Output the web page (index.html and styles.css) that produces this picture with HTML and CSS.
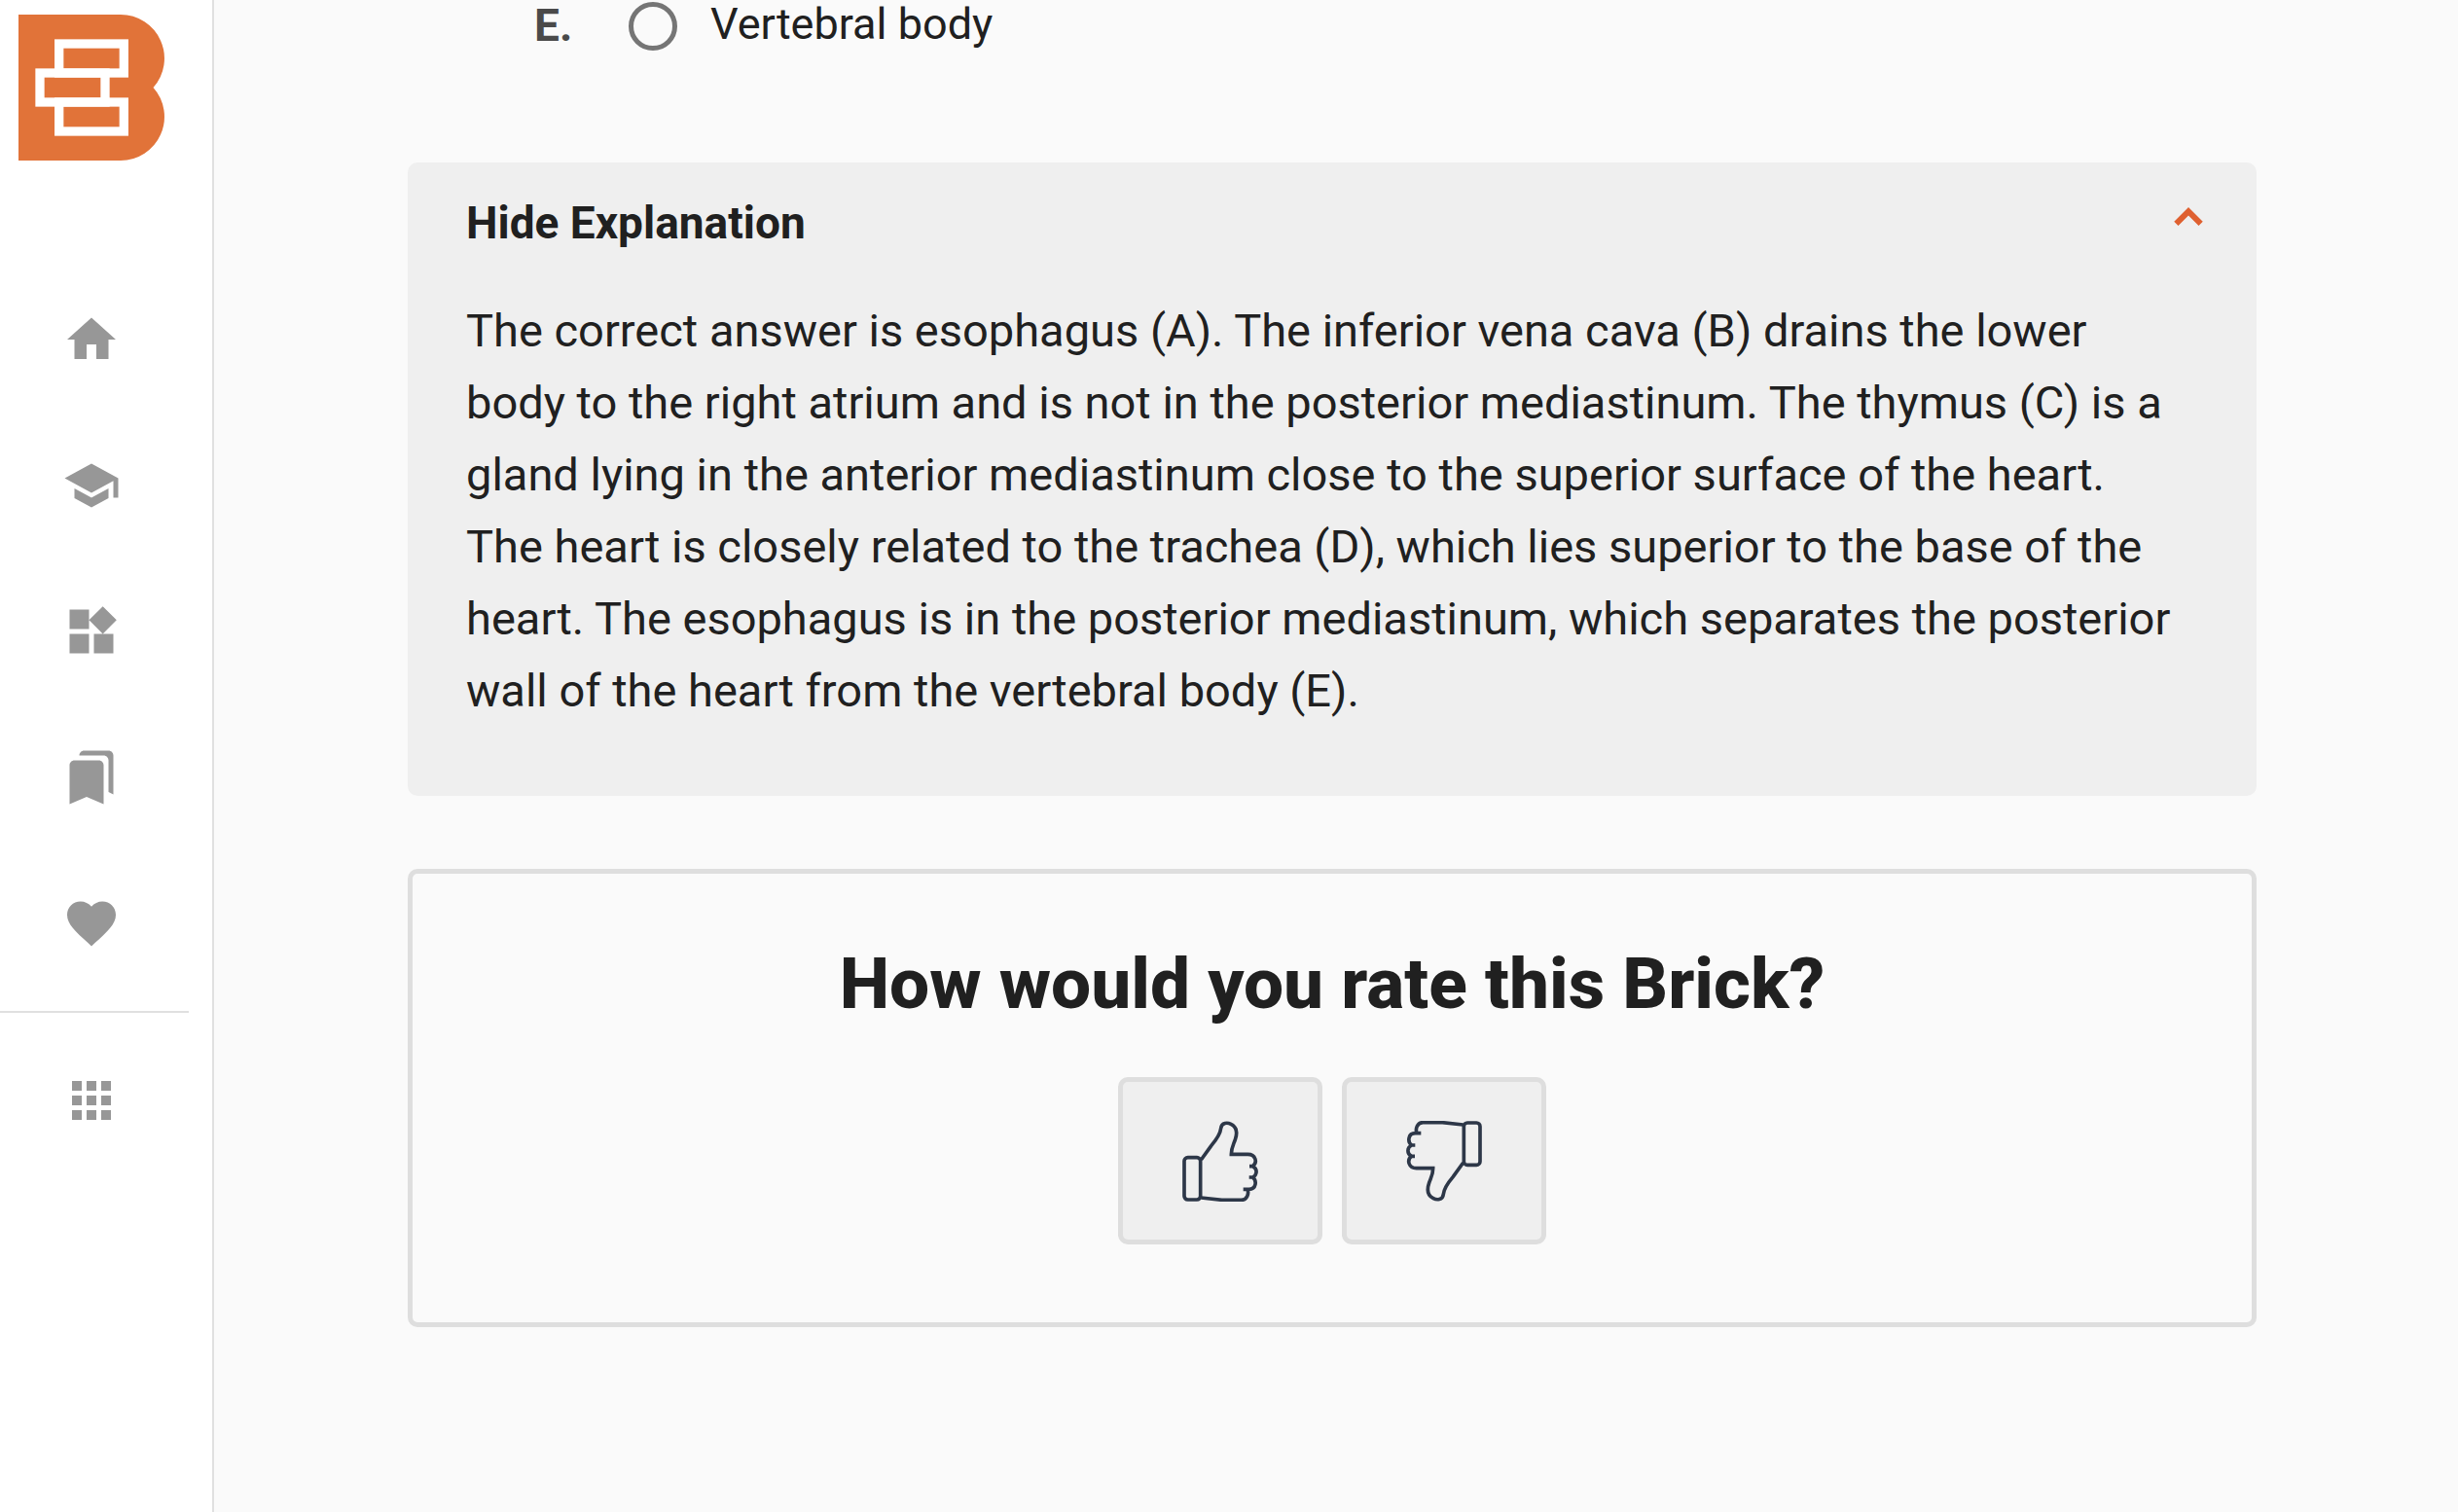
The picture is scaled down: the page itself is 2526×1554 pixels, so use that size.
FILE: index.html
```html
<!DOCTYPE html>
<html lang="en">
<head>
<meta charset="utf-8">
<meta name="viewport" content="width=device-width, initial-scale=1">
<title>Brick review</title>
<link rel="stylesheet" href="styles.css">
</head>
<body>
<div class="app">
  <aside class="sidebar">
    <a class="logo" href="#" aria-label="Bricks home">
      <svg viewBox="0 0 150 150" aria-hidden="true">
        <path fill="#e17339" d="M0 0H105A45 45 0 0 1 138.5 75A45 45 0 0 1 105 150H0Z"/>
        <g fill="none" stroke="#fff" stroke-width="9.3">
          <rect x="41.7" y="30" width="66.6" height="30"/>
          <rect x="22" y="60" width="67" height="30"/>
          <rect x="41.7" y="90" width="66.6" height="30"/>
        </g>
      </svg>
    </a>
    <nav class="nav" aria-label="Main">
      <a class="nav-item" href="#" aria-label="Home"><svg class="icon" viewBox="0 0 24 24"><path d="M10 20v-6h4v6h5v-8h3L12 3 2 12h3v8z"/></svg></a>
      <a class="nav-item" href="#" aria-label="Courses"><svg class="icon" viewBox="0 0 24 24"><path d="M5 13.18v4L12 21l7-3.82v-4L12 17l-7-3.82zM12 3L1 9l11 6 9-4.91V17h2V9L12 3z"/></svg></a>
      <a class="nav-item" href="#" aria-label="Collections"><svg class="icon" viewBox="0 0 24 24"><path d="M13 13v8h8v-8h-8zM3 21h8v-8H3v8zM3 3v8h8V3H3zm13.66-1.31L11 7.34 16.66 13l5.66-5.66-5.66-5.65z"/></svg></a>
      <a class="nav-item" href="#" aria-label="Bookmarks"><svg class="icon" viewBox="0 0 24 24"><path d="M19 18l2 1V3c0-1.100-.9-2-2-2H8.990C7.890 1 7 1.900 7 3h10c1.100 0 2 .9 2 2v13zM15 5H5c-1.100 0-2 .9-2 2v16l7-3 7 3V7c0-1.100-.9-2-2-2z"/></svg></a>
      <a class="nav-item" href="#" aria-label="Favorites"><svg class="icon" viewBox="0 0 24 24"><path d="M12 21.350l-1.450-1.320C5.400 15.360 2 12.280 2 8.500 2 5.420 4.420 3 7.500 3c1.740 0 3.410.81 4.500 2.090C13.090 3.810 14.760 3 16.500 3 19.580 3 22 5.420 22 8.500c0 3.780-3.400 6.860-8.550 11.540L12 21.350z"/></svg></a>
      <hr class="divider">
      <a class="nav-item" href="#" aria-label="Apps"><svg class="icon" viewBox="0 0 24 24"><path d="M4 8h4V4H4v4zm6 12h4v-4h-4v4zm-6 0h4v-4H4v4zm0-6h4v-4H4v4zm6 0h4v-4h-4v4zm6-10v4h4V4h-4zm-6 4h4V4h-4v4zm6 6h4v-4h-4v4zm0 6h4v-4h-4v4z"/></svg></a>
    </nav>
  </aside>

  <main class="main">
    <div class="content">
      <div class="option">
        <span class="option-letter">E.</span>
        <input class="option-radio" type="radio" name="answer" id="answer-e">
        <label class="option-label" for="answer-e">Vertebral body</label>
      </div>

      <section class="explanation">
        <button class="explanation-toggle" type="button" aria-expanded="true" aria-controls="explanation-text">
          <span>Hide Explanation</span>
          <svg class="icon chevron" viewBox="0 0 24 24" aria-hidden="true"><path d="M12 8L6.100 13.900 7.800 15.600 12 11.400 16.200 15.600 17.900 13.900z"/></svg>
        </button>
        <p class="explanation-text" id="explanation-text">The correct answer is esophagus (A). The inferior vena cava (B) drains the lower body to the right atrium and is not in the posterior mediastinum. The thymus (C) is a gland lying in the anterior mediastinum close to the superior surface of the heart. The heart is closely related to the trachea (D), which lies superior to the base of the heart. The esophagus is in the posterior mediastinum, which separates the posterior wall of the heart from the vertebral body (E).</p>
      </section>

      <section class="rating">
        <h2 class="rating-title">How would you rate this Brick?</h2>
        <div class="rating-actions">
          <button class="rate" type="button" aria-label="Thumbs up">
            <svg class="thumb" viewBox="251 184 240 249"><rect x="260" y="297" width="50" height="130" rx="11"/><path d="M312 304L343 261Q371 228 373 207C375 188 394 189 404 194C422 203 424 222 417 242C410 261 405 268 405 287H456C480 287 487 312 471 324H461H471C486 332 486 350 471 358H460H471C484 368 483 395 459 395H442H455C460 408 454 428 436 428H376L312 421"/></svg>
          </button>
          <button class="rate" type="button" aria-label="Thumbs down">
            <svg class="thumb thumb-down" viewBox="251 184 240 249"><rect x="260" y="297" width="50" height="130" rx="11"/><path d="M312 304L343 261Q371 228 373 207C375 188 394 189 404 194C422 203 424 222 417 242C410 261 405 268 405 287H456C480 287 487 312 471 324H461H471C486 332 486 350 471 358H460H471C484 368 483 395 459 395H442H455C460 408 454 428 436 428H376L312 421"/></svg>
          </button>
        </div>
      </section>
    </div>
  </main>
</div>
</body>
</html>
```
FILE: styles.css
```css
* {
  box-sizing: border-box;
}

body {
  margin: 0;
  background: #fafafa;
  color: #202020;
  font-family: Roboto, "Liberation Sans", sans-serif;
  font-weight: 450;
}

button {
  font: inherit;
  color: inherit;
  cursor: pointer;
}

.app {
  display: flex;
  min-height: 100vh;
}

/* Sidebar */
.sidebar {
  flex: none;
  width: 220px;
  padding-top: 15px;
  background: #fff;
  border-right: 2px solid #e0e0e0;
}

.logo {
  display: block;
  width: 150px;
  height: 150px;
  margin-left: 19px;
}

.logo svg {
  display: block;
}

.nav {
  width: 194px;
  margin-top: 109px;
}

.nav-item {
  display: flex;
  align-items: center;
  justify-content: center;
  width: 188px;
  height: 150px;
}

.icon {
  display: block;
  flex: none;
  width: 60px;
  height: 60px;
  fill: #979797;
}

.divider {
  height: 2px;
  margin: 15px 0;
  border: 0;
  background: #e0e0e0;
}

/* Main column */
.main {
  flex: 1;
  min-width: 0;
  padding: 0 48px 0 40px;
}

.content {
  max-width: 1900px;
  margin: 0 auto;
}

.option {
  display: flex;
  padding-left: 130px;
}

.option-letter {
  width: 97px;
  font-size: 46px;
  line-height: 52px;
  font-weight: 700;
  color: #4a4a4a;
}

.option-radio {
  appearance: none;
  width: 50px;
  height: 50px;
  margin: 2px 34px 0 0;
  border: 5px solid #757575;
  border-radius: 50%;
}

.option-radio:checked {
  background: #757575;
}

.option-label {
  font-size: 45px;
  line-height: 50px;
}

.explanation {
  margin-top: 115px;
  padding: 26px 70px 71px 60px;
  background: #efefef;
  border-radius: 10px;
}

.explanation-toggle {
  display: flex;
  justify-content: space-between;
  align-items: flex-start;
  width: calc(100% + 30px);
  padding: 0;
  border: 0;
  background: none;
  font-size: 46px;
  font-weight: 700;
  line-height: 72px;
}

.chevron {
  fill: #df6030;
}

.explanation-text {
  margin: 38px 0 0;
  font-size: 47px;
  line-height: 74px;
}

/* Rating card */
.rating {
  margin-top: 75px;
  padding: 68px 40px 80px;
  border: 5px solid #dedede;
  border-radius: 10px;
  text-align: center;
}

.rating-title {
  margin: 0 0 51px;
  font-size: 73px;
  font-weight: 800;
  line-height: 90px;
}

.rating-actions {
  display: flex;
  justify-content: center;
  gap: 20px;
}

.rate {
  display: flex;
  align-items: center;
  justify-content: center;
  width: 210px;
  height: 172px;
  padding: 0;
  background: #efefef;
  border: 5px solid #dedede;
  border-radius: 10px;
}

.thumb {
  width: 80px;
  height: 83px;
  fill: none;
  stroke: #2d3748;
  stroke-width: 11;
}

.thumb-down {
  transform: rotate(180deg);
}
```
